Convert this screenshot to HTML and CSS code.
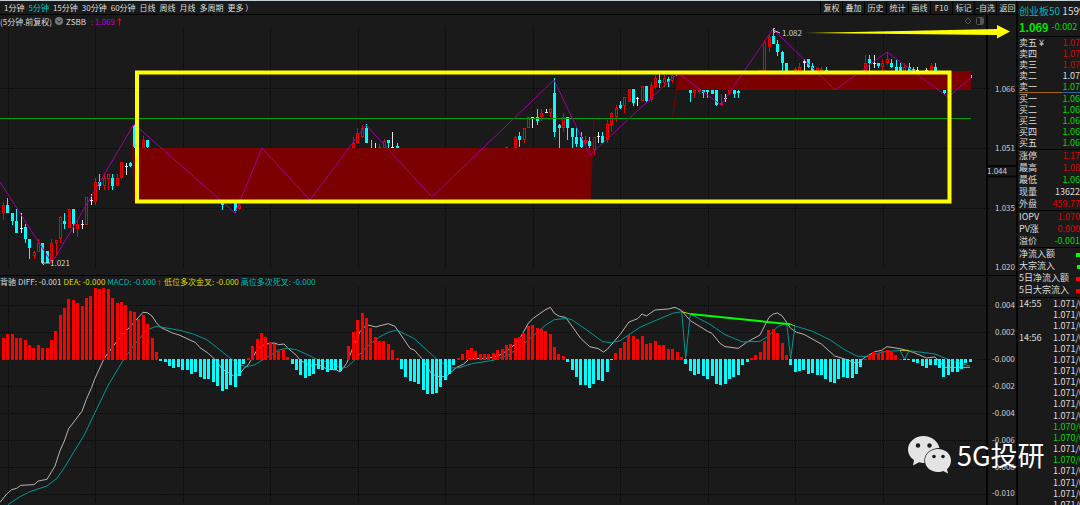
FILE: index.html
```html
<!DOCTYPE html>
<html lang="zh-CN">
<head>
<meta charset="utf-8">
<title>创业板50</title>
<link rel="stylesheet" href="styles.css">
</head>
<body>
<main class="terminal">
  <nav class="toolbar">
    <div class="periods">
      <button>1分钟</button><button class="on">5分钟</button><button>15分钟</button><button>30分钟</button><button>60分钟</button><button>日线</button><button>周线</button><button>月线</button><button>多周期</button><button>更多 ）</button>
    </div>
    <div class="tools">
      <button>复权</button><button>叠加</button><button>历史</button><button>统计</button><button>画线</button><button>F10</button><button>标记</button><button>-自选</button><button>返回</button>
    </div>
  </nav>

  <section class="panel">
    <header class="legend">
      <span>(5分钟.前复权)</span>
      <svg class="dot" viewBox="0 0 8 8"><circle cx="4" cy="4" r="4" fill="#777"/><path d="M2 3.2L4 5.2L6 3.2" fill="none" stroke="#222"/></svg>
      <span>ZSBB</span>
      <span class="magenta signal">: 1.069<b class="up">↑</b></span>
      <svg class="corner" viewBox="0 0 20 8"><path d="M4 1L7 4L4 7L1 4Z" fill="none" stroke="#555"/><rect x="12.500" y=".5" width="7" height="7" rx="1" fill="none" stroke="#555"/><rect x="16" y="1" width="3" height="6" fill="#555"/></svg>
    </header>
    <svg class="chart" viewBox="0 27 1018 248">
      <g id="price-grid" class="grid"></g>
      <path class="axis" d="M987 15V275M1017 0V275"/>
      <path class="axis" d="M987 166H1016M987 176.500H1016"/>
      <g id="candles" shape-rendering="crispEdges"></g>
      <path class="zone" d="M139 148H592L590 201H139L134 201L132 150L130 120L135 160Z"/>
      <path class="zone" d="M677 71H971V90H677L673 118L672 118L676 90Z"/>
      <path class="zone-line" d="M594 119L590 200"/>
      <path class="mean" d="M0 118.500H971"/>
      <path class="zigzag" d="M0 182L52 263L134 124L235 213L262 148L310 200L366 125L432 197L554 80L590 155L678 73L721 105L773 29L835 90L887 52L948 97L971 78"/>
      <rect class="frame" x="137" y="72.500" width="812.500" height="129"/>
      <path class="arrow" d="M806 33L997 29V25L1010 31.500L997 38.500V35Z"/>
      <path class="mark" d="M780 33L773 30M775 28L773 30L775 33M50 263H42M44 261L42 263L44 265"/>
      <g class="label">
        <text x="782" y="36">1.082</text><text x="50" y="266">1.021</text>
        <text x="995" y="92">1.066</text><text x="995" y="151">1.051</text><text x="987" y="174">1.044</text><text x="995" y="211">1.035</text><text x="995" y="270">1.020</text>
      </g>
    </svg>
  </section>

  <section class="panel">
    <header class="legend sub">
      <span>背驰</span><span>DIFF: -0.001</span><span class="yellow">DEA: -0.000</span><span class="teal">MACD: -0.000<b class="up">↑</b></span><span class="yellow">低位多次金叉: -0.000</span><span class="teal">高位多次死叉: -0.000</span>
    </header>
    <svg class="chart" viewBox="0 287 1018 218">
      <g id="macd-grid" class="grid"></g>
      <path class="axis" d="M987 275V505M1017 275V505"/>
      <g transform="translate(0 270) scale(.33333)">
        <polyline class="diff" points="0,697 20,672 35,659 50,655 62,646 102,644 115,633 141,628 165,588 180,542 193,513 206,476 246,424 259,388 275,352 285,325 313,264 352,212 395,165 429,127 442,128 456,138 469,158 482,172 515,188 540,196 587,218 600,233 625,250 650,273 665,296 700,317 718,314 732,295 745,284 758,262 771,240 784,228 800,222 823,219 836,224 852,222 862,233 889,256 902,272 930,286 955,284 981,297"/>
        <polyline class="dea" points="24,704 60,680 90,665 141,648 170,626 195,590 220,548 250,500 285,428 325,345 370,270 400,228 440,180 469,169 500,174 540,181 580,192 620,209 650,232 690,264 720,285 740,290 765,284 800,262 836,240 862,235 889,239 920,253 955,270 981,275"/>
      </g>
      <g transform="translate(300 270) scale(.33333)">
        <polyline class="diff" points="81,297 110,300 120,306 140,280 160,230 180,185 200,164 228,171 240,167 265,161 285,169 305,198 330,235 343,240 369,270 395,312 420,321 440,318 470,292 490,283 510,265 550,266 580,262 600,255 632,235 660,205 685,160 698,146 735,120 751,112 763,130 778,139 797,142 842,205 869,230 895,236 910,246 922,238 960,194"/>
        <polyline class="dea" points="81,275 120,293 140,292 160,274 200,230 240,200 265,187 291,180 343,206 369,230 409,266 450,294 480,293 515,281 579,271 619,258 660,232 698,198 737,165 763,149 800,145 815,149 856,177 908,215 935,218 960,212"/>
      </g>
      <g transform="translate(620 290) scale(.33333)">
        <polyline class="diff" points="0,134 27,96 53,86 66,72 79,78 105,60 145,57 165,52 185,62 211,92 263,124 276,130 300,160 315,170 355,175 380,157 420,135 447,82 460,72 472,69 486,77 512,115 530,127 552,133 604,162 644,198 690,212 700,218 715,218 735,202 765,185 785,181 801,170 840,176 880,187 919,204 945,201 975,232 1050,232"/>
        <polyline class="dea" points="0,152 60,112 110,90 158,70 185,65 197,205 211,72 270,103 315,134 368,156 420,154 447,137 473,110 500,99 512,205 525,108 578,124 631,150 670,177 710,198 740,200 788,186 840,181 854,208 867,182 945,192 1000,215 1050,228"/>
        <path class="gold" d="M185 65L211 72M512 103L525 108M840 181H867"/>
        <path class="diverge" d="M211 72L512 103"/>
      </g>
      <g id="histogram" shape-rendering="crispEdges"></g>
      <g class="label">
        <text x="995" y="308">0.004</text><text x="995" y="335">0.002</text><text x="992" y="362">-0.000</text><text x="992" y="389">-0.002</text><text x="992" y="416">-0.004</text><text x="992" y="443">-0.006</text><text x="992" y="470">-0.008</text><text x="992" y="496">-0.010</text>
      </g>
    </svg>
  </section>

  <div class="watermark">
    <svg viewBox="0 0 43 38">
      <path fill="#e4e4e4" d="M15.500 0C7 0 0 6 0 13.500C0 18 2.300 21.500 6 24L5 29.500L11 26.300C13 26.900 14.500 27 16.500 27C15 18.500 22 12 31.500 12C30 5 23.500 0 15.500 0Z"/>
      <path fill="#e4e4e4" d="M30 13C22.500 13 17 18 17 24.500C17 31 22.500 36 30 36C32 36 33.500 35.700 35.200 35L40 37.500L39 33.200C41.500 31 43 28 43 24.500C43 18 37.500 13 30 13Z"/>
      <g fill="#1a1a1a"><circle cx="10" cy="9.500" r="2.200"/><circle cx="21.500" cy="9.500" r="2.200"/><circle cx="26" cy="20.500" r="1.800"/><circle cx="35" cy="20.500" r="1.800"/></g>
    </svg>
    <span>5G投研</span>
  </div>
</main>

<aside class="quote">
  <h1 class="name"><span class="teal">创业板50</span> 1599</h1>
  <p class="last"><strong>1.069</strong><span>-0.002</span></p>
  <table class="book">
    <tr><th>卖五 ¥</th><td class="red">1.07</td></tr>
    <tr><th>卖四</th><td class="red">1.07</td></tr>
    <tr><th>卖三</th><td class="red">1.07</td></tr>
    <tr><th>卖二</th><td>1.07</td></tr>
    <tr><th>卖一</th><td class="green">1.07</td></tr>
  </table>
  <div class="split"></div>
  <table class="book bids">
    <tr><th>买一</th><td class="green">1.06</td></tr>
    <tr><th>买二</th><td class="green">1.06</td></tr>
    <tr><th>买三</th><td class="green">1.06</td></tr>
    <tr><th>买四</th><td class="green">1.06</td></tr>
    <tr><th>买五</th><td class="green">1.06</td></tr>
  </table>
  <table class="stats">
    <tr><th>涨停</th><td class="red">1.17</td></tr>
    <tr><th>最高</th><td class="red">1.08</td></tr>
    <tr><th>最低</th><td class="green">1.06</td></tr>
    <tr><th>现量</th><td>13622</td></tr>
    <tr><th>外盘</th><td class="red">459.77</td></tr>
  </table>
  <table class="stats">
    <tr><th>IOPV</th><td class="red">1.070</td></tr>
    <tr><th>PV涨</th><td class="red">0.000</td></tr>
    <tr><th>溢价</th><td class="green">-0.001</td></tr>
  </table>
  <table class="stats flows">
    <tr><th>净流入额</th><td><i class="chip lime"></i></td></tr>
    <tr><th>大宗流入</th><td><i class="chip lime short"></i></td></tr>
    <tr><th>5日净流入额</th><td><i class="chip"></i></td></tr>
    <tr><th>5日大宗流入</th><td><i class="chip"></i></td></tr>
  </table>
  <div class="ticks">
    <table>
      <tr><th>14:55</th><td>1.071/0</td></tr>
      <tr><th></th><td>1.071/0</td></tr>
      <tr><th></th><td>1.071/0</td></tr>
      <tr><th>14:56</th><td>1.071/0</td></tr>
      <tr><th></th><td>1.071/0</td></tr>
      <tr><th></th><td>1.071/0</td></tr>
      <tr><th></th><td>1.071/0</td></tr>
      <tr><th></th><td>1.071/0</td></tr>
      <tr><th></th><td>1.071/0</td></tr>
      <tr><th></th><td>1.071/0</td></tr>
      <tr><th></th><td>1.071/0</td></tr>
      <tr><th></th><td class="green">1.070/0</td></tr>
      <tr><th></th><td class="green">1.070/0</td></tr>
      <tr><th></th><td>1.071/0</td></tr>
      <tr><th></th><td class="green">1.070/0</td></tr>
      <tr><th></th><td>1.071/0</td></tr>
      <tr><th></th><td>1.071/0</td></tr>
      <tr><th></th><td>1.071/0</td></tr>
      <tr><th></th><td>1.071/0</td></tr>
    </table>
  </div>
</aside>
<script src="chart.js"></script>
</body>
</html>
```
FILE: styles.css
```css
* { box-sizing: border-box; }

body {
  margin: 0;
  display: flex;
  height: 100vh;
  overflow: hidden;
  border-top: 1px solid #c4d0d4;
  background: #1a1a1a;
  color: #dcdcdc;
  font: 8px/12px "Noto Sans CJK SC", "Noto Sans", sans-serif;
}

button {
  border: 0;
  padding: 0;
  background: none;
  color: inherit;
  font: inherit;
  white-space: nowrap;
}

.teal { color: #00b8b8; }
.yellow { color: #dcdc00; }
.magenta { color: #c800c8; }
.red { color: #dc0000; }
.green { color: #00d800; }

.terminal {
  position: relative;
  flex: 1;
  min-width: 0;
}

.toolbar {
  display: flex;
  justify-content: space-between;
  height: 14px;
  border-bottom: 1px solid #000;
  line-height: 13px;
}
.periods { display: flex; gap: 4px; padding-left: 4px; }
.periods .on { color: #00c8c8; }
.tools { display: flex; }
.tools button {
  width: 22px;
  border-left: 1px solid #000;
}

.legend {
  display: flex;
  align-items: center;
  gap: 3px;
  height: 12px;
  line-height: 11px;
  white-space: nowrap;
}
.legend.sub {
  gap: 2px;
  height: 12px;
  border-top: 1px solid #000;
  line-height: 9px;
}
.dot { width: 8px; height: 8px; }
.corner { width: 20px; height: 8px; margin-left: auto; margin-right: 34px; }
.signal { margin-left: 2px; }
.up { color: #f00; }
.sub .up { font-size: 6px; }

.chart {
  display: block;
  width: 100%;
  overflow: visible;
}
.grid { fill: none; stroke: #000; stroke-dasharray: 1 1; opacity: .7; }
.axis { fill: none; stroke: #050505; stroke-width: 2; }
.zone { fill: #7b0000; }
.zone-line { stroke: #7b0000; }
.mean { stroke: #00a000; }
.zigzag { fill: none; stroke: #a000a0; }
.frame { fill: none; stroke: #ff0; stroke-width: 4; }
.arrow { fill: #ff0; }
.mark { fill: none; stroke: #c8c8c8; }
.label { fill: #d0d0d0; font-size: 8px; }
.diff, .dea, .gold, .diverge { fill: none; stroke-width: 3; }
.diff { stroke: #b4b4b4; }
.dea { stroke: #009898; }
.gold { stroke: #c8c800; }
.diverge { stroke: #0f0; stroke-width: 6; }

.watermark {
  position: absolute;
  left: 908px;
  bottom: 31px;
  display: flex;
  align-items: center;
  gap: 6px;
  color: #fff;
  font-size: 27px;
  line-height: 38px;
  white-space: nowrap;
}
.watermark svg { width: 43px; height: 38px; }

.quote {
  display: flex;
  flex-direction: column;
  width: 62px;
  padding-left: 1px;
  overflow: hidden;
  font-size: 9px;
}
.name {
  margin: 0;
  font-size: 10px;
  font-weight: 400;
  line-height: 20px;
  white-space: nowrap;
}
.last {
  display: flex;
  align-items: center;
  gap: 3px;
  margin: 0;
  height: 16px;
  padding-bottom: 4px;
  border-bottom: 1px solid #000;
  color: #00d800;
}
.last strong { font-size: 11px; color: #00e800; }

table { width: 100%; border-collapse: collapse; }
th, td { padding: 0; font-weight: 400; white-space: nowrap; }
th { text-align: left; }
td { text-align: right; }
.book { line-height: 11px; }
.split {
  height: 1px;
  background: linear-gradient(90deg, #a86414 70%, #2864a0 70%);
}
.bids { margin-bottom: 1px; }
.stats { border-top: 1px solid #000; line-height: 12px; }
.flows { margin-bottom: 1px; }
.chip {
  display: inline-block;
  width: 4px;
  height: 4px;
  background: #f00;
  vertical-align: middle;
}
.chip.lime { background: #0f0; }
.chip.short { width: 3px; }

.ticks { flex: 1; min-height: 0; border-top: 1px solid #000; line-height: 11px; }
.ticks table { width: 65px; height: calc(100% + 5px); }
```
FILE: chart.js
```js
const NS = "http://www.w3.org/2000/svg";
const STEP = 4.375;
const FIRST = 3.5;

function add(parent, name, attrs) {
  const el = document.createElementNS(NS, name);
  for (const key in attrs) el.setAttribute(key, attrs[key]);
  parent.appendChild(el);
}

function grid(id, rows, top, bottom) {
  const g = document.getElementById(id);
  for (const y of rows) add(g, "path", { d: `M0 ${y}H990` });
  for (let i = 0; i < 11; i++) {
    add(g, "path", { d: `M${Math.floor(8 + i * 87.5) + 0.5} ${top}V${bottom}` });
  }
}
grid("price-grid", [88.5, 148.5, 208.5], 28, 267);
grid("macd-grid", [305.5, 332.5, 359.5, 386.5, 413.5, 440.5, 467.5, 494.5], 287, 503);

// MACD histogram, three units to a pixel
const macd = [
  67, 77, 77, 66, 67, 59, 45, 37, 46, 37, 37, 61, 88, 136, 155, 184, 179, 171, 162, 187,
  193, 216, 212, 216, 214, 187, 172, 175, 164, 147, 145, 124, 134, 107, 66, 23, -7, -10, -22, -26,
  -24, -33, -33, -45, -39, -55, -59, -60, -69, -82, -96, -90, -77, -85, -50, -15, 6, 43, 63, 80,
  70, 55, 47, 28, 30, 10, -16, -32, -47, -57, -52, -46, -29, -32, -38, -34, -33, -37, 0, 43,
  84, 119, 142, 127, 95, 70, 58, 56, 47, 31, 7, -31, -53, -66, -68, -76, -94, -105, -104, -101,
  -85, -64, -45, -17, 7, 17, 31, 36, 26, 19, 19, 17, 22, 31, 34, 46, 49, 65, 70, 82,
  101, 104, 97, 94, 87, 79, 39, 17, 11, -10, -34, -54, -79, -79, -88, -76, -64, -66, -38, -4,
  22, 36, 55, 76, 71, 64, 71, 49, 52, 57, 46, 45, 34, 34, 24, 9, -16, -37, -47, -46,
  -52, -59, -52, -74, -79, -74, -60, -54, -49, -17, -8, 7, 14, 24, 58, 91, 94, 81, 51, 16,
  -19, -38, -37, -32, -46, -43, -49, -49, -60, -68, -73, -61, -53, -57, -57, -46, -25, 2, 16, 24,
  21, 26, 30, 24, 14, 4, -4, -3, -10, -13, -22, -28, -18, -17, -28, -53, -47, -39, -39, -29,
  -13, -10
];
const hist = document.getElementById("histogram");
macd.forEach((v, i) => {
  const h = Math.round(Math.abs(v) / 3);
  if (!h) return;
  add(hist, "rect", {
    x: Math.round(FIRST + i * STEP - 1.7),
    y: v > 0 ? 360 - h : 359,
    width: 3,
    height: h,
    fill: v > 0 ? "#f00" : "#0ff"
  });
});

// index, colour, high, low, body top, body bottom
const candles = [
  [0, "r", 202, 220, 205, 213], [1, "c", 198, 213, 205, 213], [2, "c", 213, 225, 213, 221],
  [3, "c", 209, 233, 221, 233], [4, "w", 213, 233, 228, 229], [5, "c", 224, 243, 227, 239],
  [6, "c", 239, 259, 239, 248], [7, "r", 251, 259, 252, 256], [8, "r", 239, 252, 243, 252],
  [9, "c", 243, 263, 243, 263], [10, "c", 251, 263, 251, 263], [11, "r", 239, 263, 243, 263],
  [12, "r", 240, 256, 240, 243], [13, "r", 216, 243, 217, 239], [14, "c", 213, 229, 221, 224],
  [15, "r", 209, 228, 209, 228], [16, "c", 209, 233, 209, 224], [17, "r", 220, 237, 224, 229],
  [18, "w", 220, 229, 224, 225], [19, "r", 197, 225, 197, 225], [20, "w", 194, 205, 200, 201],
  [21, "r", 178, 205, 182, 202], [22, "c", 174, 190, 182, 186], [23, "r", 174, 190, 178, 186],
  [24, "r", 174, 190, 174, 179], [25, "c", 174, 190, 178, 186], [26, "r", 174, 186, 178, 186],
  [27, "r", 162, 179, 162, 178], [28, "w", 163, 175, 166, 167], [29, "c", 162, 167, 163, 166],
  [30, "c", 124, 148, 126, 147], [32, "r", 136, 148, 140, 148], [33, "c", 140, 148, 140, 147],
  [50, "c", 200, 210, 200, 205], [53, "c", 200, 213, 203, 211], [54, "r", 203, 210, 205, 209],
  [80, "r", 137, 148, 143, 148], [81, "r", 128, 143, 133, 143], [82, "r", 125, 138, 128, 137],
  [83, "c", 124, 143, 128, 143], [84, "c", 140, 148, 148, 148], [85, "w", 143, 148, 148, 148],
  [86, "r", 144, 148, 147, 148], [87, "r", 139, 148, 141, 148], [88, "c", 140, 148, 140, 143],
  [89, "w", 132, 148, 147, 148], [90, "c", 143, 148, 146, 148], [115, "r", 147, 148, 147, 148],
  [117, "r", 136, 148, 137, 148], [118, "c", 132, 147, 136, 140], [119, "r", 128, 143, 128, 140],
  [120, "r", 117, 128, 117, 128], [121, "w", 117, 128, 117, 118], [122, "c", 109, 125, 117, 121],
  [123, "r", 109, 121, 113, 117], [124, "w", 109, 113, 112, 113], [125, "r", 108, 117, 109, 113],
  [126, "c", 78, 137, 93, 132], [127, "c", 124, 148, 125, 128], [128, "r", 113, 132, 117, 128],
  [129, "c", 117, 140, 117, 128], [130, "c", 128, 148, 128, 137], [131, "c", 128, 147, 137, 144],
  [132, "c", 132, 148, 137, 147], [133, "r", 136, 145, 140, 143], [134, "c", 137, 148, 141, 146],
  [135, "r", 137, 155, 137, 150], [136, "w", 132, 143, 136, 137], [137, "c", 132, 143, 136, 143],
  [138, "r", 120, 143, 124, 140], [139, "r", 112, 132, 113, 125], [140, "r", 105, 122, 108, 117],
  [141, "c", 101, 109, 105, 108], [142, "r", 97, 113, 97, 106], [143, "r", 89, 102, 89, 102],
  [144, "c", 89, 106, 89, 103], [145, "w", 97, 106, 98, 99], [146, "r", 86, 101, 86, 101],
  [147, "c", 86, 102, 86, 101], [148, "r", 82, 102, 85, 100], [149, "r", 75, 89, 78, 87],
  [150, "c", 74, 88, 80, 83], [151, "r", 75, 87, 78, 83], [152, "c", 77, 87, 79, 82],
  [153, "r", 75, 83, 75, 81], [154, "c", 74, 79, 75, 76], [157, "c", 90, 102, 90, 93],
  [158, "r", 90, 98, 90, 93], [159, "r", 90, 94, 90, 92], [160, "c", 90, 98, 90, 93],
  [161, "c", 90, 98, 90, 92], [162, "c", 90, 94, 90, 94], [163, "c", 90, 106, 90, 105],
  [164, "r", 94, 106, 103, 105], [165, "w", 94, 102, 98, 99], [166, "r", 90, 95, 90, 93],
  [167, "c", 90, 98, 90, 94], [168, "c", 90, 98, 91, 93], [173, "r", 70, 71, 70, 71],
  [174, "r", 40, 71, 42, 71], [175, "r", 35, 52, 37, 47], [176, "c", 28, 44, 36, 44],
  [177, "c", 40, 56, 44, 52], [178, "c", 51, 71, 52, 63], [179, "c", 63, 71, 63, 71],
  [181, "r", 67, 71, 69, 71], [182, "r", 63, 71, 67, 71], [183, "w", 59, 71, 61, 63],
  [184, "c", 59, 68, 59, 67], [185, "c", 63, 71, 66, 71], [186, "r", 67, 71, 68, 71],
  [187, "r", 67, 71, 69, 71], [188, "c", 67, 71, 70, 71], [197, "r", 55, 71, 63, 71],
  [198, "c", 55, 71, 59, 63], [199, "w", 55, 68, 63, 64], [200, "c", 63, 68, 63, 66],
  [201, "r", 59, 71, 63, 67], [202, "r", 52, 65, 59, 63], [203, "c", 59, 68, 63, 67],
  [204, "c", 60, 71, 67, 71], [205, "c", 63, 71, 67, 71], [206, "r", 63, 71, 67, 71],
  [207, "c", 63, 71, 67, 71], [208, "c", 67, 71, 69, 71], [209, "w", 67, 71, 70, 71],
  [211, "w", 68, 71, 70, 71], [212, "r", 63, 71, 66, 71], [213, "c", 63, 71, 67, 71],
  [215, "c", 90, 94, 90, 93], [221, "c", 74, 79, 75, 78]
];
const colours = { r: "#f00000", c: "#0ff", w: "#e8e8e8" };
const series = document.getElementById("candles");
for (const [i, kind, high, low, top, bottom] of candles) {
  const x = Math.round(FIRST + i * STEP - 0.5);
  const fill = colours[kind];
  const h = Math.max(bottom - top, 1);
  add(series, "rect", { x, y: high, width: 1, height: low - high, fill });
  add(series, "rect", { x: x - 1, y: top, width: 3, height: h, fill });
  if (kind === "r" && h > 2) {
    add(series, "rect", { x, y: top + 1, width: 1, height: h - 2, fill: "#1a1a1a" });
  }
}
```
